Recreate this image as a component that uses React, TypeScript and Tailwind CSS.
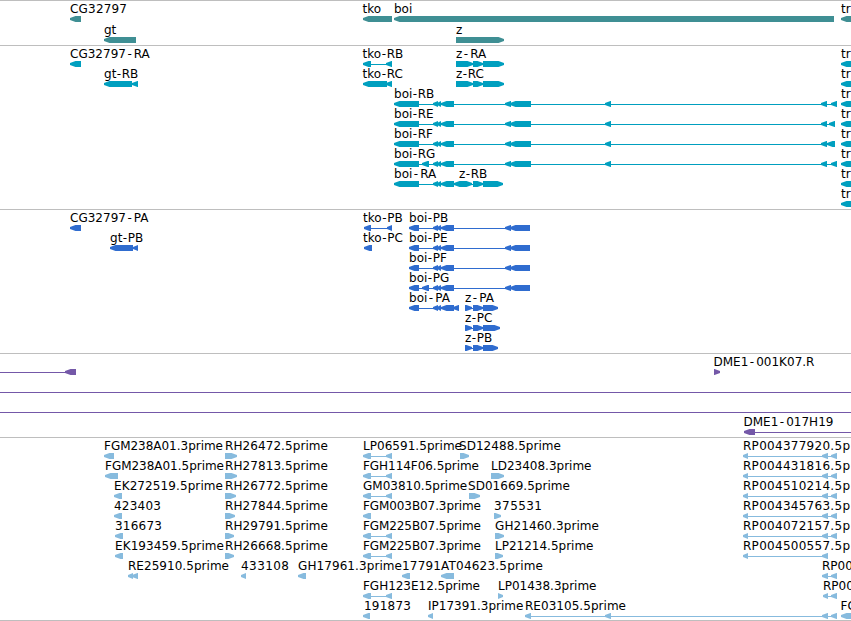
type Dir = "left" | "right";
type Exon = [number, number];

interface Feature {
  row: number;
  name?: string;
  x: number;
  exons: Exon[];
  dir?: Dir;
  line?: Exon;
  width?: number;
}

interface Track {
  id: string;
  height: number;
  rowHeight: number;
  color: string;
  features: Feature[];
}

const zExons = (end: number): Exon[] => [
  [456, 473],
  [473, 483],
  [483, end],
];

const boiStart: Exon[] = [
  [433, 438],
  [437, 441],
  [441, 454],
];

const boiTranscript = (tail: Exon[], extra: Exon[] = []): Exon[] => [
  [394, 419],
  ...extra,
  ...boiStart,
  [505, 511],
  [510, 531],
  [605, 611],
  ...tail,
];

const boiProtein = (extra: Exon[] = []): Exon[] => [
  [409, 419],
  ...extra,
  ...boiStart,
  [505, 511],
  [510, 530],
];

const tkoExons: Exon[] = [
  [363, 371],
  [386, 392],
];

const rpExons: Exon[] = [
  [743, 748],
  [822, 828],
  [831, 837],
];

const tracks: Track[] = [
  {
    id: "genes",
    height: 45,
    rowHeight: 21,
    color: "#3f8f94",
    features: [
      { row: 0, name: "CG32797", x: 70, width: 57, exons: [[70, 81]] },
      { row: 0, name: "tko", x: 362.5, exons: [[363, 392]] },
      { row: 0, name: "boi", x: 394, exons: [[394, 834]] },
      { row: 0, name: "tr", x: 841, exons: [[841, 860]] },
      { row: 1, name: "gt", x: 104, exons: [[104, 136]] },
      { row: 1, name: "z", x: 456, exons: [[456, 504]], dir: "right" },
    ],
  },
  {
    id: "transcripts",
    height: 164,
    rowHeight: 20,
    color: "#009fbf",
    features: [
      { row: 0, name: "CG32797-RA", x: 70, exons: [[70, 81]] },
      { row: 0, name: "tko-RB", x: 362.5, exons: tkoExons },
      { row: 0, name: "z-RA", x: 456, exons: zExons(504), dir: "right" },
      { row: 1, name: "gt-RB", x: 104, exons: [[104, 132], [132, 138]] },
      { row: 1, name: "tko-RC", x: 362.5, exons: [[363, 387], [386, 392]] },
      { row: 1, name: "z-RC", x: 456, exons: zExons(504), dir: "right" },
      { row: 2, name: "boi-RB", x: 394, exons: boiTranscript([[821, 827], [831, 837]]) },
      { row: 3, name: "boi-RE", x: 394, exons: boiTranscript([[821, 827], [829, 835]]) },
      { row: 4, name: "boi-RF", x: 394, exons: boiTranscript([[821, 827], [827, 835]]) },
      { row: 5, name: "boi-RG", x: 394, exons: boiTranscript([[821, 827], [831, 837]], [[422, 429]]) },
      { row: 6, name: "boi-RA", x: 394, exons: [[394, 419], ...boiStart, [454, 460]] },
      { row: 6, name: "z-RB", x: 459, exons: [[460, 472], [473, 483], [483, 503]], dir: "right" },
      ...[0, 1, 2, 3, 4, 5, 6, 7].map(
        (row): Feature => ({ row, name: "tr", x: 841, exons: [[841, 860]] }),
      ),
    ],
  },
  {
    id: "proteins",
    height: 144,
    rowHeight: 20,
    color: "#2f6ccf",
    features: [
      { row: 0, name: "CG32797-PA", x: 70, exons: [[70, 81]] },
      { row: 0, name: "tko-PB", x: 363, exons: [[364, 371], [387, 392]] },
      { row: 0, name: "boi-PB", x: 409, exons: boiProtein() },
      { row: 1, name: "gt-PB", x: 110, exons: [[110, 133], [133, 138]] },
      { row: 1, name: "tko-PC", x: 363, exons: [[364, 372]] },
      { row: 1, name: "boi-PE", x: 409, exons: boiProtein() },
      { row: 2, name: "boi-PF", x: 409, exons: boiProtein() },
      { row: 3, name: "boi-PG", x: 409, exons: boiProtein([[422, 429]]) },
      { row: 4, name: "boi-PA", x: 409, exons: [[409, 419], ...boiStart, [453, 459]] },
      { row: 4, name: "z-PA", x: 465, exons: [[465, 472], [473, 483], [483, 498]], dir: "right" },
      { row: 5, name: "z-PC", x: 465, exons: [[465, 472], [473, 483], [483, 500]], dir: "right" },
      { row: 6, name: "z-PB", x: 465, exons: [[465, 472], [473, 483], [483, 498]], dir: "right" },
    ],
  },
  {
    id: "bacs",
    height: 84,
    rowHeight: 20,
    color: "#7458a8",
    features: [
      { row: 0, x: 0, exons: [[65, 76]], line: [0, 76] },
      { row: 0, name: "DME1-001K07.R", x: 713.5, exons: [[714, 720]], dir: "right" },
      { row: 1, x: 0, exons: [], line: [0, 851] },
      { row: 2, x: 0, exons: [], line: [0, 851] },
      { row: 3, name: "DME1-017H19", x: 743.5, exons: [[744, 755]], line: [744, 851] },
    ],
  },
  {
    id: "ests",
    height: 183,
    rowHeight: 20,
    color: "#87bbde",
    features: [
      { row: 0, name: "FGM238A01.3prime", x: 104, width: 119, exons: [[104, 114]] },
      { row: 0, name: "RH26472.5prime", x: 225, width: 103, exons: [[225, 237]], dir: "right" },
      { row: 0, name: "LP06591.5prime", x: 363, width: 99, exons: tkoExons },
      { row: 0, name: "SD12488.5prime", x: 459, width: 102, exons: [[460, 469]], dir: "right" },
      { row: 0, name: "RP004377920.5p", x: 743, width: 107, exons: rpExons },
      { row: 1, name: "FGM238A01.5prime", x: 105, width: 119, exons: [[105, 118]] },
      { row: 1, name: "RH27813.5prime", x: 225, width: 103, exons: [[225, 237]], dir: "right" },
      { row: 1, name: "FGH114F06.5prime", x: 363, width: 116, exons: tkoExons },
      { row: 1, name: "LD23408.3prime", x: 491, exons: [[491, 504]], dir: "right" },
      { row: 1, name: "RP004431816.5p", x: 743, width: 107, exons: rpExons },
      { row: 2, name: "EK272519.5prime", x: 114, width: 109, exons: [[114, 122]] },
      { row: 2, name: "RH26772.5prime", x: 225, width: 103, exons: [[225, 236]], dir: "right" },
      { row: 2, name: "GM03810.5prime", x: 363, exons: tkoExons },
      { row: 2, name: "SD01669.5prime", x: 468, width: 102, exons: [[469, 480]], dir: "right" },
      { row: 2, name: "RP004510214.5p", x: 743, width: 107, exons: rpExons },
      { row: 3, name: "423403", x: 114, width: 47, exons: [[114, 122]] },
      { row: 3, name: "RH27844.5prime", x: 225, width: 103, exons: [[225, 235]], dir: "right" },
      { row: 3, name: "FGM003B07.3prime", x: 363, width: 118, exons: [[363, 371]] },
      { row: 3, name: "375531", x: 494, width: 48, exons: [[494, 501]], dir: "right" },
      { row: 3, name: "RP004345763.5p", x: 743, width: 107, exons: rpExons },
      { row: 4, name: "316673", x: 115, width: 47, exons: [[115, 123]] },
      { row: 4, name: "RH29791.5prime", x: 225, width: 103, exons: [[225, 234]], dir: "right" },
      { row: 4, name: "FGM225B07.5prime", x: 363, width: 118, exons: tkoExons },
      { row: 4, name: "GH21460.3prime", x: 495, width: 104, exons: [[495, 504]], dir: "right" },
      { row: 4, name: "RP004072157.5p", x: 743, width: 107, exons: rpExons },
      { row: 5, name: "EK193459.5prime", x: 115, width: 109, exons: [[115, 123]] },
      { row: 5, name: "RH26668.5prime", x: 225, width: 103, exons: [[225, 234]], dir: "right" },
      { row: 5, name: "FGM225B07.3prime", x: 363, width: 118, exons: tkoExons },
      { row: 5, name: "LP21214.5prime", x: 495, exons: [[495, 503]], dir: "right" },
      { row: 5, name: "RP004500557.5p", x: 743, width: 107, exons: [[743, 748], [822, 828]] },
      { row: 6, name: "RE25910.5prime", x: 128, width: 101, exons: [[128, 133], [132, 138]] },
      { row: 6, name: "433108", x: 241, width: 48, exons: [[241, 246]] },
      { row: 6, name: "GH17961.3prime", x: 298, width: 104, exons: [[298, 306]] },
      { row: 6, name: "17791", x: 402, width: 39, exons: [[402, 410]] },
      { row: 6, name: "AT04623.5prime", x: 441, width: 102, exons: [[441, 454]] },
      { row: 6, name: "RP00", x: 822, exons: [[822, 828], [831, 837]] },
      { row: 7, name: "FGH123E12.5prime", x: 363, width: 117, exons: tkoExons },
      { row: 7, name: "LP01438.3prime", x: 498, exons: [[498, 503]], dir: "right" },
      { row: 7, name: "RP00", x: 823, exons: [[823, 828], [831, 837]] },
      { row: 8, name: "191873", x: 364, width: 47, exons: [[363, 370]] },
      { row: 8, name: "IP17391.3prime", x: 428, exons: [[428, 433]] },
      { row: 8, name: "RE03105.5prime", x: 525, width: 101, exons: [[525, 531], [605, 611], [822, 828], [831, 837]] },
      { row: 8, name: "FG", x: 840.5, exons: [[841, 860]] },
    ],
  },
];

function arrowPoints([start, end]: Exon, y: number, dir: Dir) {
  const head = Math.min(5.5, end - start);
  const tip = dir === "left" ? start : end;
  const tail = dir === "left" ? end : start;
  const step = dir === "left" ? 1 : -1;
  const mid = tip + step * head * 0.5;
  const neck = tip + step * head;

  return [
    [tip, y + 2],
    [mid, y + 1],
    [neck, y],
    [tail, y],
    [tail, y + 6],
    [neck, y + 6],
    [mid, y + 5],
    [tip, y + 4],
  ]
    .map((point) => point.join(","))
    .join(" ");
}

function Label({ name, x, y, width }: { name: string; x: number; y: number; width?: number }) {
  const dash = name.indexOf("-");
  const [before, after] = /[BCEFG]$/.test(name) ? [0.5, 0.5] : [1.5, 2];
  const dx =
    dash > 0
      ? [...name].map((_, i) => (i === dash ? before : i === dash + 1 ? after : 0)).join(" ")
      : undefined;

  return (
    <text x={x} y={y} dx={dx} textLength={width} className="fill-black">
      {name}
    </text>
  );
}

function FeatureGlyph({ feature, rowHeight }: { feature: Feature; rowHeight: number }) {
  const { row, name, x, exons, dir = "left", width } = feature;
  const top = row * rowHeight;
  const span = feature.line ?? [exons[0][0], exons[exons.length - 1][1]];

  return (
    <g>
      <rect x={span[0]} y={top + 18} width={span[1] - span[0]} height={1} />
      {exons.map((exon) => (
        <polygon key={exon[0]} points={arrowPoints(exon, top + 15, dir)} />
      ))}
      {name && <Label name={name} x={x} y={top + 12} width={width} />}
    </g>
  );
}

function TrackPanel({ track }: { track: Track }) {
  return (
    <section
      className="w-full overflow-hidden border-t border-[#bebebe]"
      style={{ height: track.height }}
    >
      <svg
        width={851}
        height={track.height - 1}
        fill={track.color}
        className="block font-['DejaVu_Sans',sans-serif] text-[12px]"
      >
        {track.features.map((feature, idx) => (
          <FeatureGlyph key={idx} feature={feature} rowHeight={track.rowHeight} />
        ))}
      </svg>
    </section>
  );
}

export default function App() {
  return (
    <main className="flex h-[621px] w-[851px] flex-col overflow-hidden border-b border-[#bebebe] bg-white">
      {tracks.map((track) => (
        <TrackPanel key={track.id} track={track} />
      ))}
    </main>
  );
}
